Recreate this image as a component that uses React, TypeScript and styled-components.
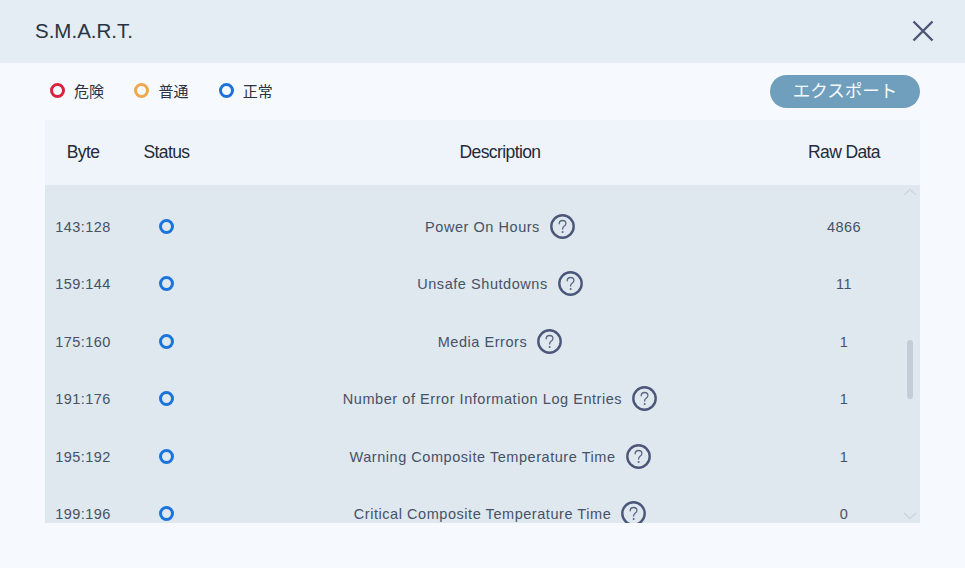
import React from 'react';
import styled, { createGlobalStyle } from 'styled-components';

const GlobalStyle = createGlobalStyle`
	html, body {
		margin: 0;
		padding: 0;
		background: #f6fafe;
	}
	body {
		font-family: "Liberation Sans", Arial, "Noto Sans CJK JP", sans-serif;
	}
`;

const COLUMNS = '76px 91px 576px 112px 20px';

const levels = [
	{ label: '危険', color: '#d8243f' },
	{ label: '普通', color: '#eea84f' },
	{ label: '正常', color: '#1b74dc' }
];

const rows = [
	{ byte: '143:128', name: 'Power On Hours', raw: '4866' },
	{ byte: '159:144', name: 'Unsafe Shutdowns', raw: '11' },
	{ byte: '175:160', name: 'Media Errors', raw: '1' },
	{ byte: '191:176', name: 'Number of Error Information Log Entries', raw: '1' },
	{ byte: '195:192', name: 'Warning Composite Temperature Time', raw: '1' },
	{ byte: '199:196', name: 'Critical Composite Temperature Time', raw: '0' }
];

const HelpIcon = () => (
	<HelpSvg viewBox="0 0 25 25" fill="none">
		<circle cx="12.5" cy="12.5" r="11.2" stroke="#4b5778" strokeWidth="2.4" />
		<path
			d="M9.2 9.8c0-2 1.4-3.3 3.4-3.3s3.3 1.2 3.3 2.9c0 1.4-.8 2.1-1.8 2.8-1 .7-1.5 1.3-1.5 2.8"
			stroke="#5a6680"
			strokeWidth="1.3"
			strokeLinecap="round"
		/>
		<circle cx="12.6" cy="18" r="1" fill="#5a6680" />
	</HelpSvg>
);

const App: React.FC = () => (
	<Page>
		<GlobalStyle />
		<Header>
			<Title>S.M.A.R.T.</Title>
			<CloseButton>
				<svg width="22" height="22" viewBox="0 0 22 22" fill="none">
					<path d="M1.5 1.5l19 19M20.5 1.5l-19 19" stroke="#4b5772" strokeWidth="2.4" />
				</svg>
			</CloseButton>
		</Header>
		<Toolbar>
			<Legend>
				{levels.map((level) => (
					<LegendItem key={level.label}>
						<Ring color={level.color} />
						{level.label}
					</LegendItem>
				))}
			</Legend>
			<ExportButton>エクスポート</ExportButton>
		</Toolbar>
		<Table>
			<HeadRow>
				<HeadCell>Byte</HeadCell>
				<HeadCell>Status</HeadCell>
				<HeadCell>Description</HeadCell>
				<HeadCell>Raw Data</HeadCell>
			</HeadRow>
			<TableBody>
				{rows.map((row) => (
					<Row key={row.byte}>
						<Cell>{row.byte}</Cell>
						<Cell>
							<StatusRing color="#1b74dc" />
						</Cell>
						<Cell>
							<Description>
								{row.name}
								<HelpIcon />
							</Description>
						</Cell>
						<Cell>{row.raw}</Cell>
					</Row>
				))}
				<ScrollUp viewBox="0 0 14 8" fill="none">
					<path d="M1 7l6-5.5L13 7" stroke="#cdd5df" strokeWidth="1.4" />
				</ScrollUp>
				<ScrollThumb />
				<ScrollDown viewBox="0 0 14 8" fill="none">
					<path d="M1 1l6 5.5L13 1" stroke="#cdd5df" strokeWidth="1.4" />
				</ScrollDown>
			</TableBody>
		</Table>
	</Page>
);

export default App;

const Page = styled.div`
	width: 965px;
	height: 568px;
	overflow: hidden;
	background: #f6fafe;
	color: #2a3242;
`;

const Header = styled.header`
	height: 63px;
	box-sizing: border-box;
	padding: 0 31px 0 35px;
	display: flex;
	align-items: center;
	justify-content: space-between;
	background: #e4ecf4;
`;

const Title = styled.h1`
	margin: 0 0 2px;
	font-size: 20.5px;
	font-weight: 400;
	color: #2b3343;
`;

const CloseButton = styled.div`
	display: flex;
	width: 22px;
	height: 22px;
	margin-bottom: 2px;
`;

const Toolbar = styled.div`
	height: 57px;
	box-sizing: border-box;
	padding: 12px 45px 0 50px;
	display: flex;
	align-items: flex-start;
	justify-content: space-between;
`;

const Legend = styled.div`
	display: flex;
	align-items: center;
	height: 31px;
	gap: 30.4px;
`;

const LegendItem = styled.div`
	display: flex;
	align-items: center;
	gap: 9px;
	font-size: 15px;
	color: #2b3343;
`;

const Ring = styled.span<{ color: string }>`
	display: block;
	width: 15px;
	height: 15px;
	box-sizing: border-box;
	border-radius: 50%;
	border: 3px solid ${({ color }) => color};
`;

const StatusRing = styled(Ring)`
	margin-bottom: 0.6px;
`;

const ExportButton = styled.button`
	width: 150px;
	height: 33px;
	padding: 0 0 4px;
	border: none;
	border-radius: 17px;
	background: #709fbd;
	color: #f4fafc;
	font-family: inherit;
	font-size: 17.5px;
`;

const Table = styled.div`
	margin: 0 45px;
	width: 875px;
`;

const HeadRow = styled.div`
	height: 65px;
	display: grid;
	grid-template-columns: ${COLUMNS};
	align-items: center;
	justify-items: center;
	background: #eff4fb;
`;

const HeadCell = styled.div`
	font-size: 17.5px;
	letter-spacing: -0.6px;
	color: #232a3a;
`;

const TableBody = styled.div`
	position: relative;
	height: 338px;
	box-sizing: border-box;
	padding-top: 13px;
	overflow: hidden;
	background: #dfe7ef;
`;

const Row = styled.div`
	height: 57.5px;
	display: grid;
	grid-template-columns: ${COLUMNS};
	align-items: center;
	justify-items: center;
`;

const Cell = styled.div`
	display: flex;
	align-items: center;
	font-size: 14.5px;
	letter-spacing: 0.45px;
	color: #465266;
`;

const Description = styled.div`
	display: flex;
	align-items: center;
	gap: 10px;
	letter-spacing: 0.55px;
`;

const HelpSvg = styled.svg`
	width: 25px;
	height: 25px;
	flex: none;
	margin-bottom: 0.6px;
`;

const ScrollUp = styled.svg`
	position: absolute;
	top: 3px;
	right: 3px;
	width: 14px;
	height: 8px;
`;

const ScrollThumb = styled.div`
	position: absolute;
	top: 155px;
	right: 7px;
	width: 6px;
	height: 59px;
	border-radius: 3px;
	background: #c4ccd8;
`;

const ScrollDown = styled.svg`
	position: absolute;
	bottom: 3px;
	right: 3px;
	width: 14px;
	height: 8px;
`;
